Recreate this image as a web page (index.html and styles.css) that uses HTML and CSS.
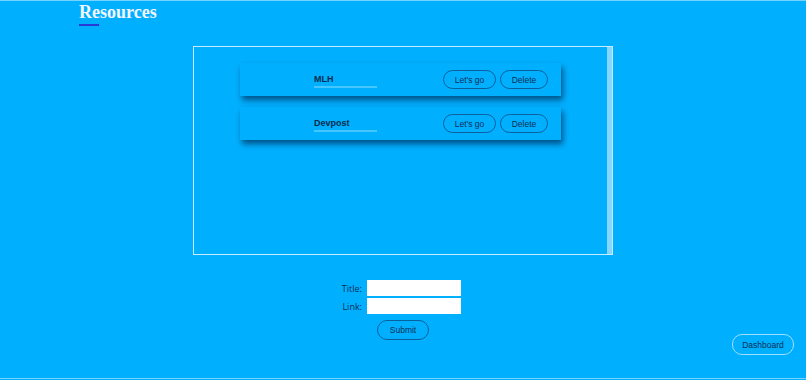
FILE: index.html
```html
<!DOCTYPE html>
<html>
<head>
<meta charset="utf-8">
<link rel="stylesheet" href="styles.css">
</head>
<body>
<div class="page">
  <header class="header">
    <h1 class="title">Resources</h1>
    <div class="title-bar"></div>
  </header>
  <section class="box">
    <div class="list">
      <div class="card">
        <div class="card-title">MLH</div>
        <div class="actions">
          <button class="pill">Let's go</button>
          <button class="pill">Delete</button>
        </div>
      </div>
      <div class="card">
        <div class="card-title">Devpost</div>
        <div class="actions">
          <button class="pill">Let's go</button>
          <button class="pill">Delete</button>
        </div>
      </div>
    </div>
    <div class="scrollbar"></div>
  </section>
  <form class="form">
    <div class="row"><label class="label">Title:</label><input class="field" type="text"></div>
    <div class="row"><label class="label">Link:</label><input class="field" type="text"></div>
    <button class="pill submit" type="button">Submit</button>
  </form>
  <button class="pill dashboard">Dashboard</button>
</div>
</body>
</html>
```
FILE: styles.css
```css
html, body {
  margin: 0;
  padding: 0;
}
body {
  background: #00b0ff;
  font-family: "Liberation Sans", Arial, sans-serif;
}
.page {
  position: relative;
  height: 377px;
  border-top: 1px solid #74d4ff;
  border-bottom: 1px solid #74d4ff;
  overflow: hidden;
}
.header {
  padding-left: 79px;
}
.title {
  margin: 0;
  font-family: "Liberation Serif", "Times New Roman", serif;
  font-weight: bold;
  font-size: 18px;
  line-height: 23px;
  color: #f4f6ff;
}
.title-bar {
  width: 20px;
  height: 2px;
  background: #2b3ad4;
}
.box {
  width: 418px;
  height: 207px;
  margin: 20px auto 0;
  border: 1px solid #c8ecff;
  display: flex;
}
.list {
  flex: 1;
  display: flex;
  flex-direction: column;
  align-items: center;
  gap: 11px;
  padding-top: 16px;
}
.scrollbar {
  width: 5px;
  background: #86d6ff;
}
.card {
  width: 321px;
  height: 33px;
  box-sizing: border-box;
  display: flex;
  align-items: center;
  padding-left: 74px;
  padding-right: 13px;
  background: #00b0ff;
  box-shadow: 2px 4px 6px rgba(0, 30, 70, 0.65);
}
.card-title {
  width: 63px;
  font-weight: bold;
  font-size: 9px;
  line-height: 10px;
  color: #062b4f;
  padding-bottom: 2px;
  border-bottom: 2px solid #45c6ff;
  margin-top: 3px;
}
.actions {
  margin-left: auto;
  display: flex;
  gap: 4px;
}
.pill {
  font-family: "Liberation Sans", Arial, sans-serif;
  font-size: 8.5px;
  color: #0b2f55;
  background: transparent;
  border: 1px solid #0b5f9c;
  border-radius: 10px;
  height: 19px;
  padding: 0;
  cursor: pointer;
}
.actions .pill {
  width: 53px;
}
.actions .pill + .pill {
  width: 48px;
}
.form {
  margin-top: 25px;
  display: flex;
  flex-direction: column;
  align-items: center;
  gap: 2px;
}
.row {
  display: flex;
  align-items: center;
  gap: 5px;
  margin-right: 13px;
}
.label {
  font-family: "Open Sans", "Liberation Sans", sans-serif;
  font-size: 9px;
  color: #0b2f55;
  width: 30px;
  text-align: right;
}
.field {
  width: 94px;
  height: 16px;
  box-sizing: border-box;
  border: none;
  background: #ffffff;
  margin: 0;
  padding: 0;
}
.submit {
  margin-top: 4px;
  width: 52px;
  height: 20px;
}
.dashboard {
  position: absolute;
  right: 12px;
  bottom: 23px;
  width: 62px;
  height: 21px;
  border-color: #9fe0ff;
  font-size: 8.5px;
}
```
